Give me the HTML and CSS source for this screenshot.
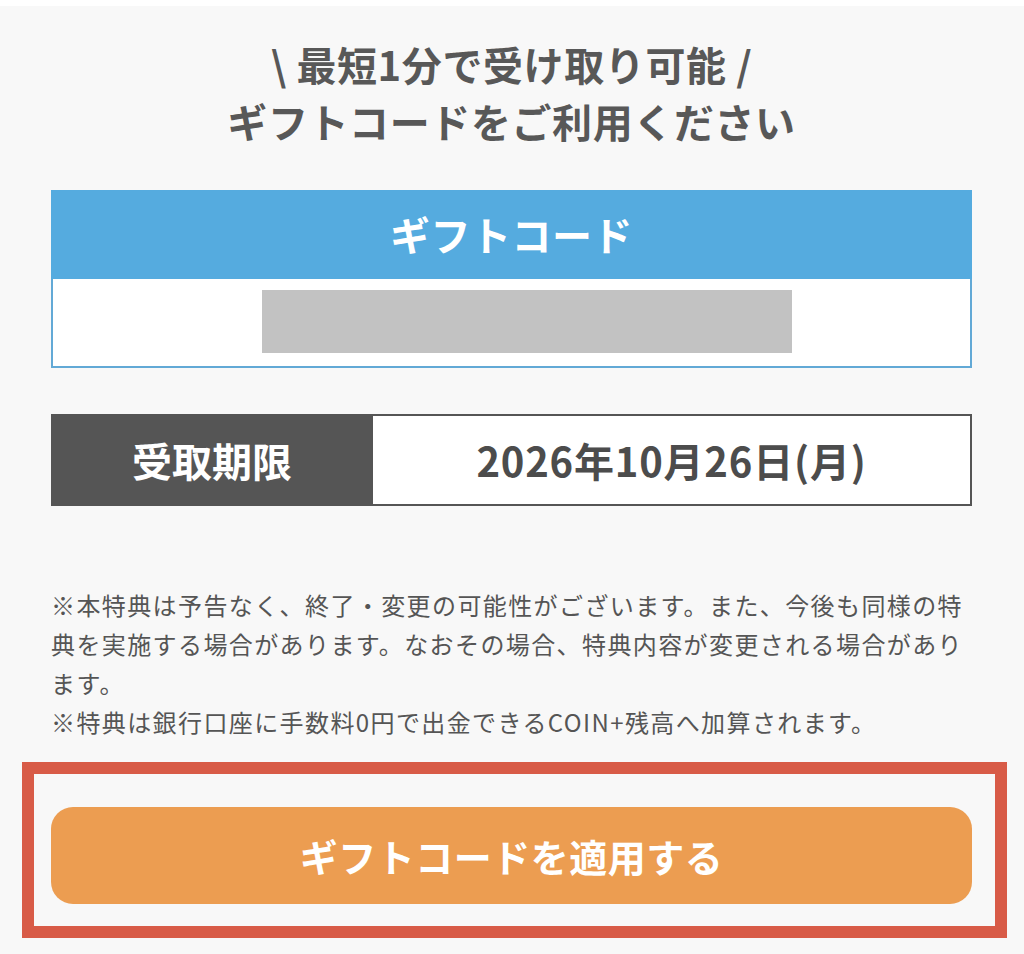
FILE: index.html
```html
<!DOCTYPE html>
<html lang="ja">
<head>
<meta charset="utf-8">
<title>ギフトコード</title>
<link rel="stylesheet" href="styles.css">
</head>
<body>
<div class="page">
  <h1 class="headline">\ 最短1分で受け取り可能 /<br>ギフトコードをご利用ください</h1>

  <section class="code-box">
    <div class="code-head">ギフトコード</div>
    <div class="code-body"><div class="code-mask"></div></div>
  </section>

  <section class="deadline">
    <div class="deadline-label">受取期限</div>
    <div class="deadline-value">2026年10月26日(月)</div>
  </section>

  <div class="notes">
    <p>※本特典は予告なく、終了・変更の可能性がございます。また、今後も同様の特典を実施する場合があります。なおその場合、特典内容が変更される場合があります。</p>
    <p>※特典は銀行口座に手数料0円で出金できるCOIN+残高へ加算されます。</p>
  </div>

  <div class="action">
    <button class="apply-btn" type="button">ギフトコードを適用する</button>
    <div class="highlight-frame"></div>
  </div>
</div>
</body>
</html>
```

FILE: styles.css
```css
html, body {
  margin: 0;
  padding: 0;
  background: #ffffff;
}

body {
  font-family: "Noto Sans CJK JP", "Noto Sans", sans-serif;
  color: #555555;
}

.page {
  margin-top: 6px;
  background: #f8f8f8;
  min-height: 948px;
  box-sizing: border-box;
  padding: 30px 52px 0 51px;
}

.headline {
  margin: 0;
  text-align: center;
  font-size: 40px;
  font-weight: 700;
  line-height: 57px;
  letter-spacing: 0.6px;
  color: #585858;
}

.code-box {
  margin-top: 40px;
}

.code-head {
  height: 89px;
  line-height: 89px;
  background: #55abdf;
  color: #ffffff;
  text-align: center;
  font-size: 40px;
  font-weight: 700;
  letter-spacing: 0.5px;
}

.code-body {
  height: 89px;
  box-sizing: border-box;
  background: #ffffff;
  border: 2px solid #62a9d6;
  border-top: none;
  padding-top: 11px;
}

.code-mask {
  width: 530px;
  height: 63px;
  margin-left: 209px;
  background: #c2c2c2;
}

.deadline {
  margin-top: 46px;
  height: 92px;
  display: flex;
}

.deadline-label {
  width: 322px;
  flex: none;
  background: #555555;
  color: #ffffff;
  display: flex;
  align-items: center;
  justify-content: center;
  font-size: 40px;
  font-weight: 700;
}

.deadline-value {
  flex: 1;
  box-sizing: border-box;
  background: #ffffff;
  border: 2px solid #555555;
  border-left: none;
  display: flex;
  align-items: center;
  justify-content: center;
  font-size: 40px;
  font-weight: 700;
  letter-spacing: 0.8px;
  color: #4c4c4c;
}

.notes {
  margin-top: 79px;
  font-size: 24px;
  line-height: 39px;
  letter-spacing: 1.4px;
  color: #555555;
}

.notes p {
  margin: 0;
}

.action {
  position: relative;
  margin-top: 66px;
}

.apply-btn {
  display: block;
  width: 100%;
  height: 97px;
  border: none;
  border-radius: 22px;
  background: #ec9d51;
  color: #ffffff;
  font-family: "Noto Sans CJK JP", "Noto Sans", sans-serif;
  font-size: 38px;
  font-weight: 700;
  letter-spacing: 0.5px;
  padding: 0;
}

.highlight-frame {
  position: absolute;
  left: -29px;
  top: -45px;
  right: -35px;
  bottom: -34px;
  border: 12px solid #d85b47;
  pointer-events: none;
}
```
